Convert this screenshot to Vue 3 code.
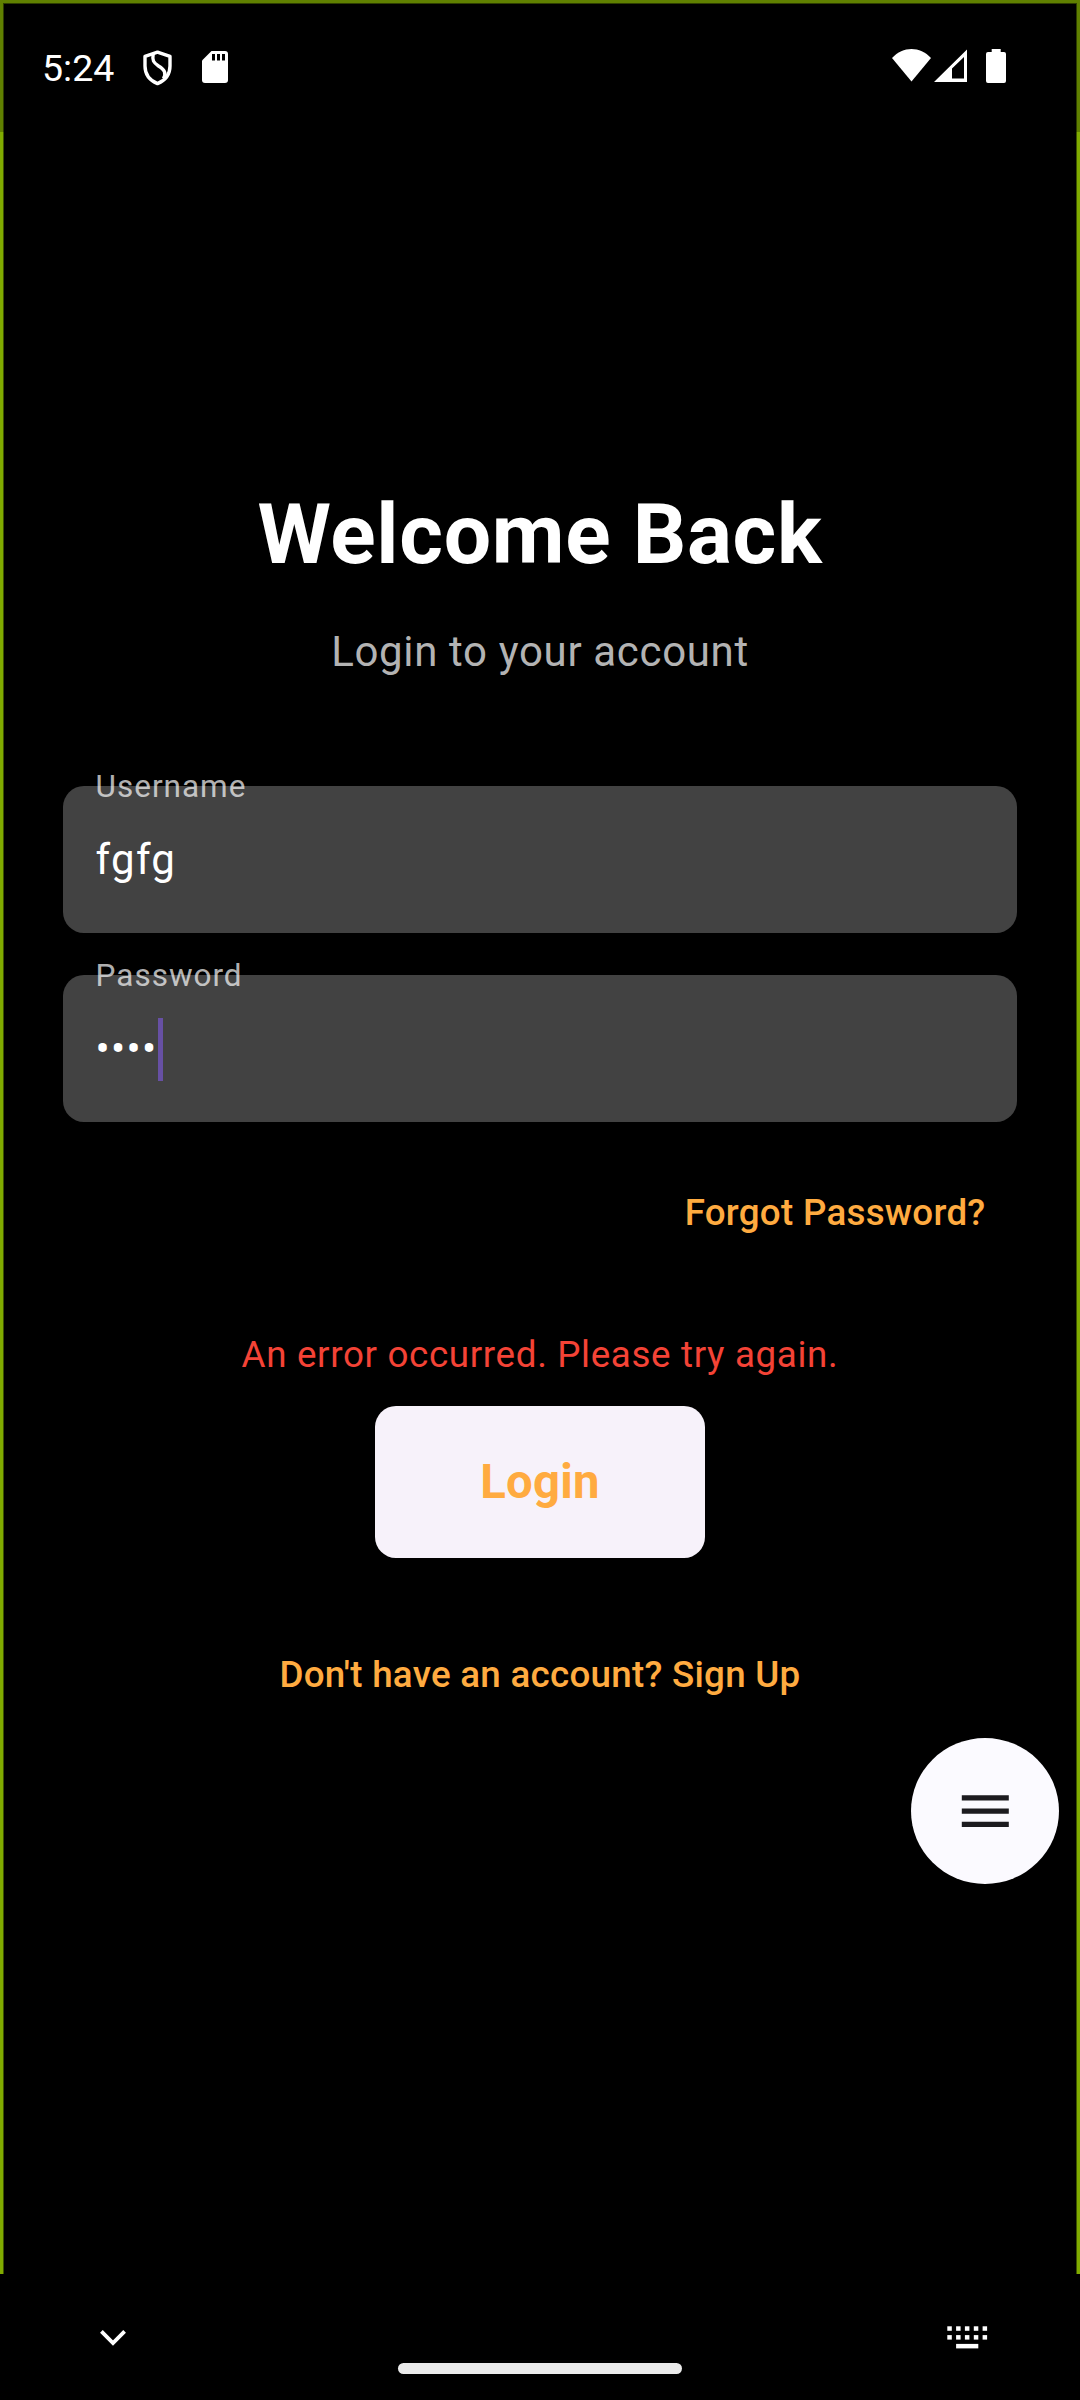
<script setup>
const keyRows = [0.3, 9.1]
const keyCols = [0.3, 9.1, 17.9, 26.8, 35.6]
</script>

<template>
  <div class="screen">
    <div class="frame"></div>
    <div class="frame-top"></div>
    <header class="status">
      <div class="left">
        <span class="time">5:24</span>
        <svg class="shield" width="30" height="36" viewBox="0 0 30 36" fill="none" stroke="#fff" stroke-width="3.4" stroke-linejoin="round">
          <path d="M14.500 2.200 L27 6.400 V16 C27 24.5 22 30.5 14.500 33.600 C7 30.500 2 24.500 2 16 V6.400 Z" />
          <path d="M10.200 4C9 10.500 10.500 12.500 15.500 16C21.500 19.800 23.500 22.500 20.500 28.500" />
        </svg>
        <svg class="sd" width="26" height="32" viewBox="0 0 26 32">
          <path fill="#fff" d="M9.5 0H23a3 3 0 0 1 3 3V29a3 3 0 0 1-3 3H3a3 3 0 0 1-3-3V9.5Z" />
          <path fill="#000" d="M10 3h3v6.5h-3zM15 3h3v6.5h-3zM20 3h3v6.5h-3z" />
        </svg>
      </div>
      <div class="right">
        <svg width="39" height="33" viewBox="0 0 39 33"><path fill="#fff" d="M0 9C11 -3 28 -3 39 9L19.500 32.500Z" /></svg>
        <svg class="signal" width="33" height="33" viewBox="0 0 33 33"><path fill="#fff" fill-rule="evenodd" d="M33 .5V33H0ZM30 8L18 19.500V29.500H30Z" /></svg>
        <svg class="battery" width="20" height="34" viewBox="0 0 20 34"><path fill="#fff" d="M5.700 0h9v3H18a2 2 0 0 1 2 2V32a2 2 0 0 1-2 2H2a2 2 0 0 1-2-2V5a2 2 0 0 1 2-2h3.700Z" /></svg>
      </div>
    </header>

    <main>
      <h1>Welcome Back</h1>
      <p class="subtitle">Login to your account</p>
      <div class="field">
        <label>Username</label>
        <div class="value">fgfg</div>
      </div>
      <div class="field">
        <label>Password</label>
        <div class="value">••••<i class="caret"></i></div>
      </div>
      <a class="link forgot">Forgot Password?</a>
      <p class="error">An error occurred. Please try again.</p>
      <button>Login</button>
      <a class="link signup">Don't have an account? Sign Up</a>
    </main>

    <div class="fab">
      <svg width="48" height="34" viewBox="0 0 48 34" fill="#1c1b1f">
        <path d="M.8 1.300h47v5.300h-47zM.8 14.500h47v5.300h-47zM.8 27.800h47v5.300h-47z" />
      </svg>
    </div>

    <footer>
      <svg class="chevron" width="26" height="16" viewBox="0 0 26 16" fill="none" stroke="#fff" stroke-width="3.8">
        <path d="M1.400 1.400L13 13L24.600 1.400" />
      </svg>
      <span class="pill"></span>
      <svg class="keyboard" width="41" height="34" viewBox="0 0 41 34" fill="#fff">
        <template v-for="y in keyRows" :key="y">
          <rect v-for="x in keyCols" :key="x" :x="x" :y="y" width="4.5" height="4.5" />
        </template>
        <rect x="9.100" y="17.900" width="22.200" height="4.500" />
      </svg>
    </footer>
  </div>
</template>

<style>
body { margin: 0; background: #000; }
</style>

<style scoped>
.screen {
  position: relative;
  display: flex;
  flex-direction: column;
  width: 1080px;
  height: 2400px;
  overflow: hidden;
  background: #000;
  color: #fff;
  font-family: Roboto, sans-serif;
}
.frame, .frame-top {
  position: absolute;
  inset: 0 0 126px;
  box-sizing: border-box;
  border: solid #80ab00;
  border-width: 0 3px;
  box-shadow: inset 1px 0 #3c5200, inset -1px 0 #3c5200;
}
.frame-top {
  height: 132px;
  border-color: #608000;
  border-width: 3px 3px 0;
  box-shadow: inset 1px 1px #2e3e00, inset -1px 0 #2e3e00;
}
.status {
  display: flex;
  justify-content: space-between;
  height: 132px;
}
.left, .right { display: flex; align-items: flex-start; }
.left { padding-left: 42px; }
.right { padding: 49px 74px 0 0; }
.time { width: 101px; margin-top: 46px; font-size: 37.500px; line-height: 44px; }
.shield { margin-top: 49.500px; }
.sd { margin: 51px 0 0 29px; }
.signal { margin-left: 3px; }
.battery { margin-left: 19px; }
main {
  display: flex;
  flex-direction: column;
  align-items: center;
  flex: 1;
  padding: 353px 63px 0;
}
h1 {
  margin: 0;
  font-size: 84px;
  font-weight: 700;
  line-height: 100px;
  letter-spacing: .656px;
}
.subtitle {
  margin: 37px 0 104.300px;
  font-size: 42px;
  line-height: 60px;
  letter-spacing: .656px;
  color: #b3b3b3;
}
.field {
  position: relative;
  box-sizing: border-box;
  width: 954px;
  height: 147px;
  margin-bottom: 42px;
  padding: 44px 32.600px 0;
  border-radius: 21px;
  background: #424242;
}
label {
  position: absolute;
  top: -19px;
  left: 32.600px;
  font-size: 31.500px;
  line-height: 40px;
  letter-spacing: .984px;
  color: rgba(255, 255, 255, .7);
}
.value {
  display: flex;
  align-items: center;
  height: 60px;
  font-size: 42px;
  line-height: 60px;
  letter-spacing: 1.312px;
}
.caret { width: 5.250px; height: 63px; background: #6750a4; }
.link {
  font-size: 36.750px;
  font-weight: 500;
  line-height: 50px;
  letter-spacing: .262px;
  color: #ffab40;
}
.forgot { align-self: flex-end; margin: 23.700px 31.500px 0 0; }
.error {
  margin: 92.500px 0 0;
  font-size: 36.750px;
  line-height: 50px;
  letter-spacing: .656px;
  color: #f44336;
}
button {
  width: 330px;
  height: 152.250px;
  margin: 25.200px 0 92.300px;
  padding: 0;
  border: 0;
  border-radius: 21px;
  background: #f7f2fa;
  font: 700 47.250px/60px Roboto, sans-serif;
  letter-spacing: .262px;
  color: #ffab40;
}
.fab {
  position: absolute;
  top: 1738px;
  left: 911px;
  display: flex;
  align-items: center;
  justify-content: center;
  width: 148px;
  height: 146px;
  border-radius: 50%;
  background: #fbfaff;
}
footer {
  display: flex;
  align-items: flex-start;
  justify-content: space-between;
  box-sizing: border-box;
  height: 126px;
  padding: 55.500px 92px 0 100px;
}
.keyboard { margin-top: -3.500px; }
.pill { width: 284px; height: 10.500px; margin: 33.500px 0 0 7px; border-radius: 6px; background: #ebebeb; }
</style>
